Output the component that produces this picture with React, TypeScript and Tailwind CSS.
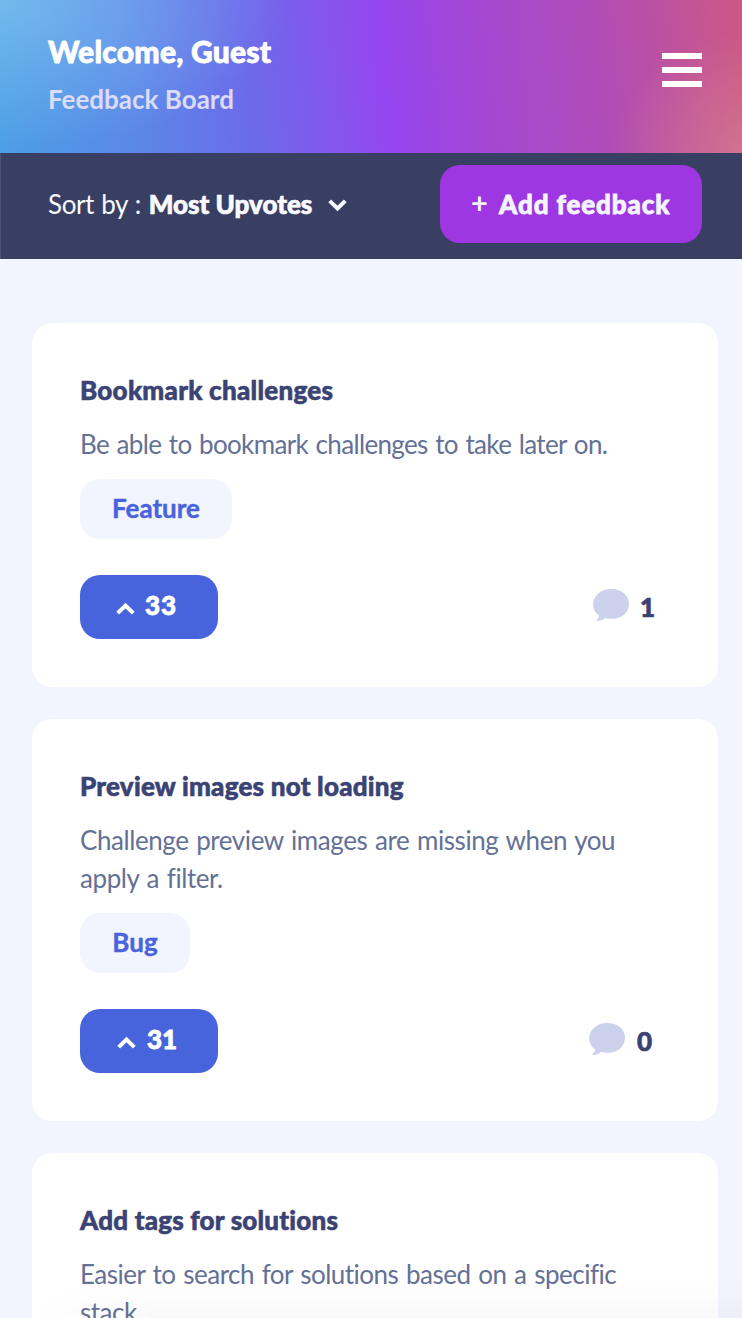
type Feedback = {
  title: string;
  titleSpacing: string;
  lines: string[];
  lineSpacing: string;
  tag?: string;
  tagWidth?: string;
  votes?: number;
  voteLayout?: string;
  comments?: number;
  commentLayout?: string;
};

const feedback: Feedback[] = [
  {
    title: "Bookmark challenges",
    titleSpacing: "tracking-[0.27px]",
    lines: ["Be able to bookmark challenges to take later on."],
    lineSpacing: "tracking-[-0.65px] [word-spacing:1.5px]",
    tag: "Feature",
    tagWidth: "w-[152px]",
    votes: 33,
    voteLayout: "pl-9 gap-[10px] tracking-[0.9px]",
    comments: 1,
    commentLayout: "gap-[11px] pr-[15px]",
  },
  {
    title: "Preview images not loading",
    titleSpacing: "tracking-[0.22px]",
    lines: ["Challenge preview images are missing when you", "apply a filter."],
    lineSpacing: "tracking-[-0.43px] [word-spacing:1.5px]",
    tag: "Bug",
    tagWidth: "w-[110px]",
    votes: 31,
    voteLayout: "pl-[37px] gap-[11px]",
    comments: 0,
    commentLayout: "gap-[12px] pr-[18px]",
  },
  {
    title: "Add tags for solutions",
    titleSpacing: "tracking-[0.2px]",
    lines: ["Easier to search for solutions based on a specific", "stack."],
    lineSpacing: "tracking-[-0.5px] [word-spacing:1.5px]",
  },
];

function Chevron({ className }: { className: string }) {
  return (
    <svg width="19" height="13" viewBox="0 0 19 13" fill="none" stroke="currentColor" strokeWidth="4" className={className}>
      <path d="M1.7 1.8L9.5 9.5L17.3 1.8" />
    </svg>
  );
}

function CommentIcon() {
  return (
    <svg width="36" height="32" viewBox="0 0 18 16" className="mb-1 shrink-0">
      <path
        fill="#cdd2ec"
        d="M2.62 16H1.346l.902-.91c.486-.491.79-1.13.872-1.823C1.036 11.887 0 9.89 0 7.794 0 3.928 3.52 0 9.03 0 14.87 0 18 3.615 18 7.455c0 3.866-3.164 7.478-8.97 7.478-1.017 0-2.078-.137-3.025-.388A4.705 4.705 0 012.62 16z"
      />
    </svg>
  );
}

function Card({ item }: { item: Feedback }) {
  return (
    <article className="flex flex-col items-start rounded-[20px] bg-white p-12">
      <h2 className={`font-black text-[#3a4374] [-webkit-text-stroke:0.6px] ${item.titleSpacing}`}>{item.title}</h2>
      <p className={`mt-4 text-[#647196] ${item.lineSpacing}`}>
        {item.lines.map((line) => (
          <span key={line} className="block whitespace-nowrap">{line}</span>
        ))}
      </p>
      {item.tag && (
        <span className={`mt-4 flex h-[60px] justify-center rounded-[20px] bg-[#f2f4fe] pt-[10px] font-bold text-[#4863dc] [-webkit-text-stroke:0.4px] ${item.tagWidth}`}>
          {item.tag}
        </span>
      )}
      {item.votes !== undefined && (
        <div className="mt-9 flex h-16 w-full justify-between">
          <button className={`flex w-[138px] items-center rounded-[20px] bg-[#4764dc] font-black text-white ${item.voteLayout}`}>
            <Chevron className="mt-[3px] rotate-180" />
            <span className="mb-1 [-webkit-text-stroke:0.8px]">{item.votes}</span>
          </button>
          <div className={`flex items-center font-black text-[#3a4374] ${item.commentLayout}`}>
            <CommentIcon />
            <span className="[-webkit-text-stroke:0.7px]">{item.comments}</span>
          </div>
        </div>
      )}
    </article>
  );
}

export default function App() {
  return (
    <div className="relative h-[1318px] w-full overflow-hidden bg-[#f2f4fe] font-['Lato','Liberation_Sans',sans-serif] text-[26px] leading-[38px]">
      <header className="flex h-[153px] items-start justify-between bg-[radial-gradient(ellipse_290px_150px_at_0%_0%,rgba(150,215,245,0.5),transparent),radial-gradient(ellipse_130px_120px_at_100%_100%,rgba(218,140,145,0.5),transparent),linear-gradient(84deg,#4c9fe5_0%,#5c86e8_19%,#6c6aea_34%,#9646ef_52%,#a548d0_66%,#b04cb8_80%,#cc5885_100%)] pr-10 pl-12">
        <div>
          <h1 className="mt-8 text-[30px] font-black tracking-[0.25px] text-white [-webkit-text-stroke:0.8px]">Welcome, Guest</h1>
          <p className="mt-[10px] font-bold text-[#dcdcfa]">Feedback Board</p>
        </div>
        <button aria-label="Menu" className="mt-[53px] flex w-10 flex-col gap-2">
          <span className="h-1.5 bg-white" />
          <span className="h-1.5 bg-white" />
          <span className="h-1.5 bg-white" />
        </button>
      </header>
      <div className="flex h-[106px] items-start justify-between border-l border-[#4b5275] bg-[#393f63] pt-3 pr-10 pl-[47px] text-[#f9faff]">
        <div className="flex h-[78px] items-center">
          <span className="mr-[8px] tracking-[-0.4px] [word-spacing:1px]">Sort by :</span>
          <span className="font-black [-webkit-text-stroke:0.7px]">Most Upvotes</span>
          <Chevron className="mt-[3px] ml-[16px]" />
        </div>
        <button className="flex h-[78px] w-[262px] items-center rounded-[20px] bg-[#9e37e1] pl-[31px] text-[#f2f4fe]">
          <span className="mr-[11px] mb-1 w-[17px] text-[29px] font-bold">+</span>
          <span className="mb-px font-black tracking-[0.9px] [-webkit-text-stroke:0.8px]">Add feedback</span>
        </button>
      </div>
      <main className="flex flex-col gap-8 pt-16 pr-6 pl-8">
        {feedback.map((item) => (
          <Card key={item.title} item={item} />
        ))}
      </main>
      <div className="pointer-events-none absolute right-0 bottom-0 left-0 h-10 bg-[linear-gradient(to_bottom,transparent,rgba(0,0,0,0.025))] [mask-image:linear-gradient(to_right,transparent_30px,black_160px)]" />
    </div>
  );
}
